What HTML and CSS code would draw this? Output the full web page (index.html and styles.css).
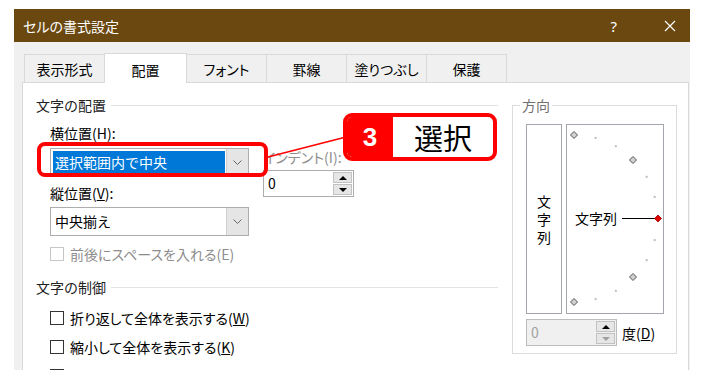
FILE: index.html
```html
<!DOCTYPE html>
<html lang="ja">
<head>
  <meta charset="UTF-8">
  <title>セルの書式設定</title>
  <link rel="stylesheet" href="styles.css">
</head>
<body>
  <div class="dialog">
    <div class="titlebar">
      <span class="title">セルの書式設定</span>
      <span class="help">?</span>
      <svg class="close" width="12" height="12" viewBox="0 0 12 12">
        <path d="M1 1 L11 11 M11 1 L1 11" stroke="#fff" stroke-width="1.2" fill="none"/>
      </svg>
    </div>

    <div class="tabs">
      <div class="tab">表示形式</div>
      <div class="tab active">配置</div>
      <div class="tab">フォント</div>
      <div class="tab">罫線</div>
      <div class="tab">塗りつぶし</div>
      <div class="tab">保護</div>
    </div>

    <div class="panel">
      <div class="left">
        <div class="group-head"><span>文字の配置</span></div>

        <div class="align-row">
          <div class="align-main">
            <div class="label">横位置(H):</div>
            <div class="select">
              <span class="sel-text selected">選択範囲内で中央</span>
              <span class="sel-btn">
                <svg width="9" height="5" viewBox="0 0 9 5"><path d="M0.5 0.5 L4.5 4.5 L8.5 0.5" stroke="#666" fill="none"/></svg>
              </span>
            </div>
            <div class="label second">縦位置(<u>V</u>):</div>
            <div class="select">
              <span class="sel-text">中央揃え</span>
              <span class="sel-btn">
                <svg width="9" height="5" viewBox="0 0 9 5"><path d="M0.5 0.5 L4.5 4.5 L8.5 0.5" stroke="#666" fill="none"/></svg>
              </span>
            </div>
          </div>
          <div class="indent">
            <div class="label disabled">インデント(I):</div>
            <div class="spin">
              <span class="spin-val">0</span>
              <span class="spin-btns">
                <span class="up"></span>
                <span class="down"></span>
              </span>
            </div>
          </div>
        </div>

        <div class="check disabled first"><span class="box"></span>前後にスペースを入れる(E)</div>

        <div class="group-head control"><span>文字の制御</span></div>
        <div class="check c1"><span class="box"></span>折り返して全体を表示する(<u>W</u>)</div>
        <div class="check c2"><span class="box"></span>縮小して全体を表示する(<u>K</u>)</div>
        <div class="check c2"><span class="box"></span>セルを結合する(<u>M</u>)</div>
      </div>

      <div class="dir">
        <span class="dir-title">方向</span>
        <div class="dial-row">
          <div class="vert-box"><span class="vert-text">文字列</span></div>
          <div class="orient-box">
            <svg width="96" height="188" viewBox="0 0 96 188">
              <g fill="#bdbdbd">
                <rect x="27.6" y="11.9" width="2" height="2"/>
                <rect x="47.8" y="20.2" width="2" height="2"/>
                <rect x="78.7" y="50.8" width="2" height="2"/>
                <rect x="86.7" y="70.9" width="2" height="2"/>
                <rect x="86.7" y="114.1" width="2" height="2"/>
                <rect x="78.7" y="134.2" width="2" height="2"/>
                <rect x="47.8" y="164.8" width="2" height="2"/>
                <rect x="27.6" y="173.1" width="2" height="2"/>
              </g>
              <g fill="#d0d0d0" stroke="#555" stroke-width="1">
                <path d="M7 6.5 L10.5 10 L7 13.5 L3.5 10 Z"/>
                <path d="M66 31.5 L69.5 35 L66 38.5 L62.5 35 Z"/>
                <path d="M66 148.5 L69.5 152 L66 155.5 L62.5 152 Z"/>
                <path d="M7 173.5 L10.5 177 L7 180.5 L3.5 177 Z"/>
              </g>
              <text x="8" y="98.5" class="dial-text">文字列</text>
              <line x1="55" y1="93.5" x2="88" y2="93.5" stroke="#000" stroke-width="1"/>
              <path d="M91 90 L94.5 93.5 L91 97 L87.5 93.5 Z" fill="#e00000" stroke="#a00000" stroke-width="0.8"/>
            </svg>
          </div>
        </div>
        <div class="deg-row">
          <div class="spin deg">
            <span class="spin-val">0</span>
            <span class="spin-btns">
              <span class="up"></span>
              <span class="down light"></span>
            </span>
          </div>
          <span class="deg-label">度(<u>D</u>)</span>
        </div>
      </div>
    </div>

    <div class="highlight"></div>
    <svg class="connector" width="90" height="30" viewBox="0 0 90 30">
      <line x1="4" y1="24" x2="82" y2="4" stroke="#ff0000" stroke-width="1.5"/>
    </svg>
    <div class="callout">
      <span class="num">3</span>
      <span class="word">選択</span>
    </div>
  </div>
</body>
</html>
```

FILE: styles.css
```css
body {
  margin: 0;
  background: #fff;
  font-family: "Noto Sans CJK JP", "Noto Sans", sans-serif;
  font-size: 14px;
  color: #000;
}

.dialog {
  position: relative;
  margin: 9px 0 0 14px;
  width: 676px;
  height: 361px;
  overflow: hidden;
  background: #f0f0f0;
}

.titlebar {
  height: 33px;
  background: #6a4810;
  color: #fff;
  display: flex;
  align-items: center;
  padding-left: 9px;
}
.title {
  font-size: 14px;
  line-height: 20px;
  font-feature-settings: "palt";
}
.help {
  margin-left: auto;
  font-family: "Noto Sans", sans-serif;
  font-size: 15px;
  line-height: 20px;
}
.close {
  margin-left: 47px;
  margin-right: 14px;
}

.tabs {
  height: 40px;
  display: flex;
  align-items: flex-end;
  padding-left: 11px;
}
.tab {
  box-sizing: border-box;
  width: 81px;
  height: 28px;
  line-height: 28px;
  text-align: center;
  border: 1px solid #d9d9d9;
  border-bottom: 0;
  margin-left: -1px;
  font-feature-settings: "palt";
}
.tab.active {
  position: relative;
  height: 30px;
  margin-bottom: -1px;
  background: #fff;
  line-height: 32px;
  width: 83px;
}

.panel {
  box-sizing: border-box;
  margin-left: 8px;
  width: 667px;
  height: 290px;
  background: #fff;
  border: 1px solid #d9d9d9;
  border-bottom: 0;
  display: flex;
  align-items: flex-start;
  padding: 12px 0 0 13px;
}

.left {
  width: 462px;
}

.group-head {
  display: flex;
  align-items: center;
  height: 20px;
  line-height: 20px;
  color: #222;
}
.group-head::after {
  content: "";
  flex: 1;
  height: 1px;
  margin-left: 5px;
  background: #e3e3e3;
}
.group-head.control {
  margin-top: 13px;
}

.label {
  height: 20px;
  line-height: 20px;
  margin-top: 8px;
  font-feature-settings: "palt";
}
.label.second {
  margin-top: 6px;
}
.label.disabled {
  color: #8d8d8d;
  margin-top: 0;
}

.align-row {
  display: flex;
  margin-left: 14px;
}
.align-main {
  width: 199px;
}

.select {
  box-sizing: border-box;
  display: flex;
  height: 29px;
  margin-top: 5px;
  border: 1px solid #adadad;
  background: #fff;
}
.label.second + .select {
  margin-top: 4px;
}
.sel-text {
  flex: 1;
  margin: 2px 1px 2px 2px;
  padding-left: 2px;
  line-height: 23px;
}
.sel-text.selected {
  background: #0078d7;
  color: #fff;
}
.sel-btn {
  width: 21px;
  background: #e5e5e5;
  border-left: 1px solid #cfcfcf;
  display: flex;
  align-items: center;
  justify-content: center;
}

.indent {
  margin: 32px 0 0 14px;
}
.spin {
  box-sizing: border-box;
  display: flex;
  width: 91px;
  height: 27px;
  margin-top: 3px;
  border: 1px solid #adadad;
  background: #fff;
}
.spin-val {
  flex: 1;
  padding-left: 4px;
  line-height: 25px;
}
.spin-btns {
  width: 19px;
  display: flex;
  flex-direction: column;
  padding: 1px 1px 1px 0;
  gap: 1px;
}
.spin-btns span {
  flex: 1;
  background: #e6e6e6;
  border: 1px solid #c2c2c2;
  display: flex;
  align-items: center;
  justify-content: center;
}
.up::before {
  content: "";
  border-left: 4px solid transparent;
  border-right: 4px solid transparent;
  border-bottom: 4px solid #000;
}
.down::before {
  content: "";
  border-left: 4px solid transparent;
  border-right: 4px solid transparent;
  border-top: 4px solid #000;
}
.down.light::before {
  border-top-color: #a0a0a0;
}

.check {
  display: flex;
  align-items: center;
  height: 20px;
  line-height: 20px;
  margin-left: 14px;
  font-feature-settings: "palt";
}
.check .box {
  box-sizing: border-box;
  width: 14px;
  height: 14px;
  margin-right: 6px;
  border: 1px solid #333;
  background: #fff;
}
.check.disabled {
  color: #8d8d8d;
}
.check.disabled .box {
  border-color: #c6c6c6;
}
.check.first {
  margin-top: 8px;
}
.check.c1 {
  margin-top: 11px;
}
.check.c2 {
  margin-top: 9px;
}

.dir {
  box-sizing: border-box;
  width: 165px;
  height: 249px;
  margin: 10px 0 0 14px;
  border: 1px solid #dcdcdc;
  padding-left: 13px;
}
.dir-title {
  display: inline-block;
  margin: -11px 0 0 -6px;
  padding: 0 2px;
  background: #fff;
  color: #707070;
  line-height: 20px;
  vertical-align: top;
}
.dial-row {
  display: flex;
  gap: 4px;
  margin-top: -2px;
}
.vert-box {
  box-sizing: border-box;
  width: 36px;
  height: 190px;
  border: 1px solid #a3a6ad;
  display: flex;
  align-items: center;
  justify-content: center;
  padding-top: 6px;
}
.vert-text {
  writing-mode: vertical-rl;
  font-size: 14px;
  line-height: 20px;
  letter-spacing: 4px;
}
.orient-box {
  box-sizing: border-box;
  width: 98px;
  height: 190px;
  border: 1px solid #a3a6ad;
}
.orient-box svg {
  display: block;
}
.dial-text {
  font-family: "Noto Sans CJK JP", sans-serif;
  font-size: 14px;
  fill: #000;
}

.deg-row {
  display: flex;
  align-items: center;
  margin-top: 5px;
}
.spin.deg {
  margin-top: 0;
  background: #f0f0f0;
  border-color: #bdbdbd;
}
.spin.deg .spin-val {
  color: #a0a0a0;
}
.deg-label {
  margin-left: 5px;
  line-height: 20px;
}

.highlight {
  position: absolute;
  left: 23px;
  top: 133px;
  width: 231px;
  height: 35px;
  box-sizing: border-box;
  border: 4px solid #ff0000;
  border-radius: 8px;
}
.connector {
  position: absolute;
  left: 250px;
  top: 124px;
}
.callout {
  position: absolute;
  left: 329px;
  top: 104px;
  width: 154px;
  height: 48px;
  box-sizing: border-box;
  border: 4px solid #ff0000;
  border-radius: 9px;
  background: #fff;
  display: flex;
  overflow: hidden;
}
.callout .num {
  width: 46px;
  background: #ff0000;
  color: #fff;
  font-family: "Liberation Sans", sans-serif;
  font-weight: bold;
  font-size: 26px;
  line-height: 40px;
  text-align: center;
}
.callout .word {
  flex: 1;
  text-align: center;
  font-size: 29px;
  line-height: 40px;
}
```
